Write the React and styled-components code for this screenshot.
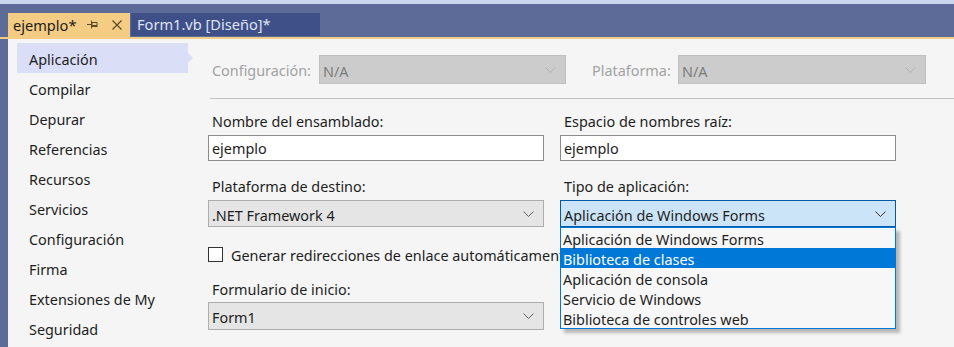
import React from "react";
import styled, { createGlobalStyle } from "styled-components";

const GlobalStyle = createGlobalStyle`
  html, body {
    margin: 0;
    padding: 0;
    background: #f5f5f5;
  }
  body {
    font-family: "Noto Sans", "Open Sans", sans-serif;
    font-size: 14.4px;
    color: #1e1e1e;
  }
`;

const sections = [
  "Aplicación",
  "Compilar",
  "Depurar",
  "Referencias",
  "Recursos",
  "Servicios",
  "Configuración",
  "Firma",
  "Extensiones de My",
  "Seguridad",
];

const appTypes = [
  "Aplicación de Windows Forms",
  "Biblioteca de clases",
  "Aplicación de consola",
  "Servicio de Windows",
  "Biblioteca de controles web",
];

const Chevron = ({ color = "#606060" }) => (
  <svg width="11" height="6" viewBox="0 0 11 6">
    <path d="M0.5 0.5 L5.5 5.5 L10.5 0.5" fill="none" stroke={color} strokeWidth="1" />
  </svg>
);

const PinIcon = () => (
  <svg width="11" height="9" viewBox="0 0 11 9">
    <path d="M0 4.5 H4 M4.5 0.5 V8.5" stroke="#5a4a2a" strokeWidth="1" fill="none" />
    <rect x="5" y="2.5" width="5" height="4" fill="none" stroke="#5a4a2a" strokeWidth="1" />
    <path d="M5 5.5 H10" stroke="#5a4a2a" strokeWidth="1" />
  </svg>
);

const CloseIcon = () => (
  <svg width="10" height="10" viewBox="0 0 10 10">
    <path d="M0.5 0.5 L9.5 9.5 M9.5 0.5 L0.5 9.5" stroke="#5a4a2a" strokeWidth="1.2" fill="none" />
  </svg>
);

const App = () => {
  return (
    <>
      <GlobalStyle />
      <StWindow>
        <StTabBar>
          <StTab active>
            <span>ejemplo*</span>
            <StTabIcons>
              <PinIcon />
              <CloseIcon />
            </StTabIcons>
          </StTab>
          <StTab>
            <span>Form1.vb [Diseño]*</span>
          </StTab>
        </StTabBar>
        <StBody>
          <StSidebar>
            {sections.map((s, i) => (
              <StNavItem key={s} selected={i === 0}>
                {s}
              </StNavItem>
            ))}
          </StSidebar>
          <StMain>
            <StConfigRow>
              <StConfigLabel width="111px">Configuración:</StConfigLabel>
              <StCombo disabled width="247px" height="29px">
                <span>N/A</span>
                <Chevron color="#b0b0b0" />
              </StCombo>
              <StConfigLabel width="90px" gap="22px">
                Plataforma:
              </StConfigLabel>
              <StCombo disabled width="248px" height="29px">
                <span>N/A</span>
                <Chevron color="#b0b0b0" />
              </StCombo>
            </StConfigRow>
            <StSeparator />
            <StGrid>
              <StField>
                <StLabel>Nombre del ensamblado:</StLabel>
                <StTextBox>ejemplo</StTextBox>
              </StField>
              <StField>
                <StLabel>Espacio de nombres raíz:</StLabel>
                <StTextBox>ejemplo</StTextBox>
              </StField>
              <StField>
                <StLabel>Plataforma de destino:</StLabel>
                <StCombo>
                  <span>.NET Framework 4</span>
                  <Chevron />
                </StCombo>
              </StField>
              <StField>
                <StLabel>Tipo de aplicación:</StLabel>
                <StDropWrap>
                  <StCombo open>
                    <span>Aplicación de Windows Forms</span>
                    <Chevron color="#333" />
                  </StCombo>
                  <StDropList>
                    {appTypes.map((t, i) => (
                      <StDropItem key={t} selected={i === 1}>
                        {t}
                      </StDropItem>
                    ))}
                  </StDropList>
                </StDropWrap>
              </StField>
            </StGrid>
            <StCheckRow>
              <StCheckBox />
              <span>Generar redirecciones de enlace automáticamente</span>
            </StCheckRow>
            <StGrid top="14px">
              <StField>
                <StLabel tight>Formulario de inicio:</StLabel>
                <StCombo height="28px">
                  <span>Form1</span>
                  <Chevron />
                </StCombo>
              </StField>
            </StGrid>
          </StMain>
        </StBody>
      </StWindow>
    </>
  );
};

export default App;

const StWindow = styled.div`
  width: 954px;
  height: 347px;
  overflow: hidden;
  display: flex;
  flex-direction: column;
  background: #f5f5f5;
`;

const StTabBar = styled.div`
  height: 24px;
  display: flex;
  align-items: flex-end;
  background: #5d6b99;
  border-top: 4px solid #ccd5f0;
  padding: 9px 0 0 8px;
  border-bottom: 2px solid #f5cc84;
  flex-shrink: 0;
`;

const StTab = styled.div`
  height: 24px;
  display: flex;
  align-items: center;
  box-sizing: border-box;
  padding: 0 8px 1px 5px;
  background: ${(p) => (p.active ? "#f5cc84" : "#3f5089")};
  color: ${(p) => (p.active ? "#1e1e1e" : "#dfe4f3")};
  width: ${(p) => (p.active ? "122px" : "189px")};
  margin-right: 1px;
  font-size: 14.6px;
  white-space: nowrap;
  ${(p) => !p.active && "height: 23px; align-self: flex-start; padding-left: 6px;"}
`;

const StTabIcons = styled.div`
  display: flex;
  align-items: center;
  gap: 14px;
  margin-left: auto;
`;

const StBody = styled.div`
  flex: 1;
  display: flex;
  border-left: 8px solid #5d6b99;
  min-height: 0;
`;

const StSidebar = styled.div`
  width: 200px;
  flex-shrink: 0;
  padding: 4px 0 0 9px;
  box-sizing: border-box;
`;

const StNavItem = styled.div`
  position: relative;
  width: 171px;
  height: 30px;
  padding: 2px 0 0 12px;
  line-height: 29px;
  box-sizing: border-box;
  white-space: nowrap;
  background: ${(p) => (p.selected ? "#dadff7" : "transparent")};
  ${(p) =>
    p.selected &&
    `
    &::after {
      content: "";
      position: absolute;
      right: -5px;
      top: 10px;
      border-left: 5px solid #dadff7;
      border-top: 5px solid transparent;
      border-bottom: 5px solid transparent;
    }
  `}
`;

const StMain = styled.div`
  flex: 1;
  padding-top: 16px;
  display: flex;
  flex-direction: column;
`;

const StConfigRow = styled.div`
  display: flex;
  align-items: center;
`;

const StConfigLabel = styled.div`
  width: ${(p) => p.width};
  margin-left: ${(p) => p.gap || "0"};
  padding: 2px 0 0 4px;
  box-sizing: border-box;
  color: #a2a2a2;
  white-space: nowrap;
`;

const StSeparator = styled.div`
  height: 1px;
  background: #c2c2c2;
  margin: 14px 0 0 2px;
`;

const StGrid = styled.div`
  display: grid;
  grid-template-columns: 336px 336px;
  column-gap: 16px;
  row-gap: 15px;
  margin-top: ${(p) => p.top || "12px"};
`;

const StField = styled.div`
  display: flex;
  flex-direction: column;
`;

const StLabel = styled.div`
  height: 20px;
  line-height: 20px;
  padding: 1px 0 0 4px;
  box-sizing: border-box;
  margin-bottom: ${(p) => (p.tight ? "3px" : "4px")};
  white-space: nowrap;
`;

const StTextBox = styled.div`
  height: 26px;
  box-sizing: border-box;
  border: 1px solid #8c8c8c;
  background: #ffffff;
  padding: 2px 0 0 3px;
  line-height: 22px;
`;

const StCombo = styled.div`
  width: ${(p) => p.width || "auto"};
  height: ${(p) => p.height || "27px"};
  box-sizing: border-box;
  display: flex;
  align-items: center;
  justify-content: space-between;
  padding: 3px 9px 0 3px;
  white-space: nowrap;
  border: 1px solid
    ${(p) => (p.disabled ? "#bfbfbf" : p.open ? "#005ba7" : "#adadad")};
  background: ${(p) => (p.disabled ? "#cccccc" : p.open ? "#cce4f7" : "#e5e5e5")};
  color: ${(p) => (p.disabled ? "#7c7c7c" : "#1e1e1e")};

  svg {
    margin-top: -3px;
  }
`;

const StDropWrap = styled.div`
  position: relative;
  z-index: 2;
`;

const StDropList = styled.div`
  position: absolute;
  left: 0;
  right: 0;
  top: 100%;
  border: 1px solid #0078d7;
  background: #f7f7f7;
  box-shadow: 4px 4px 3px rgba(0, 0, 0, 0.25);
`;

const StDropItem = styled.div`
  height: 20px;
  box-sizing: border-box;
  padding: 3px 0 0 2px;
  line-height: 17px;
  white-space: nowrap;
  background: ${(p) => (p.selected ? "#0078d7" : "transparent")};
  color: ${(p) => (p.selected ? "#ffffff" : "#1e1e1e")};
`;

const StCheckRow = styled.div`
  display: flex;
  align-items: center;
  gap: 8px;
  height: 20px;
  margin-top: 17px;
  padding-top: 1px;
  white-space: nowrap;
`;

const StCheckBox = styled.div`
  width: 15px;
  height: 15px;
  margin-top: -1px;
  box-sizing: border-box;
  border: 1px solid #333333;
  background: #ffffff;
  flex-shrink: 0;
`;
